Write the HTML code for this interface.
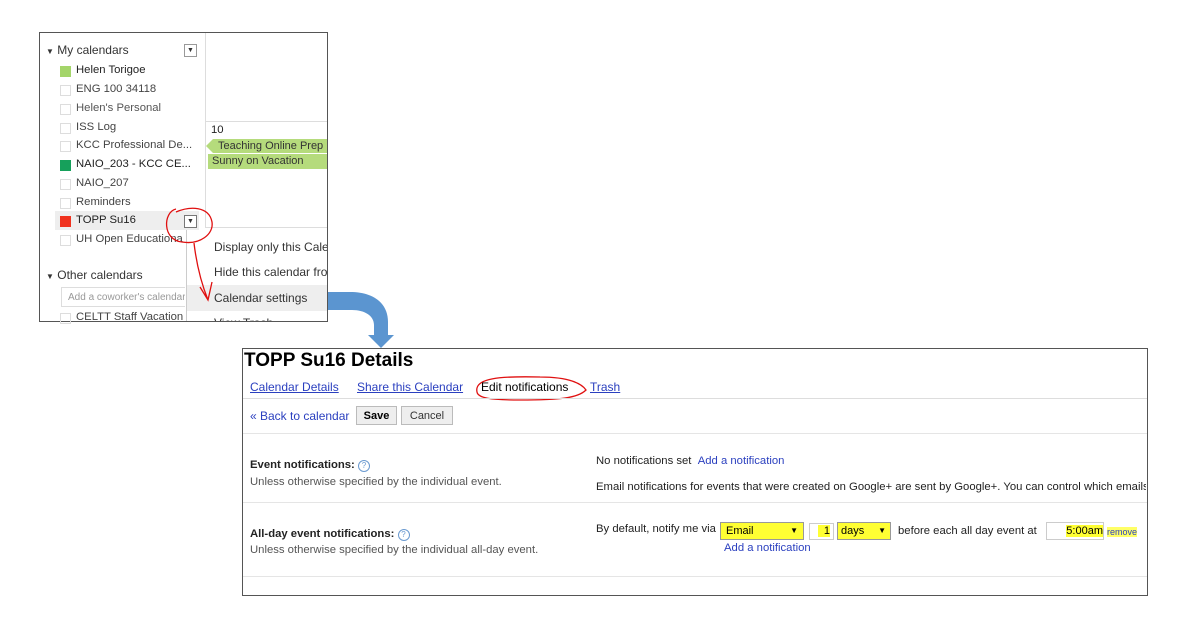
<!DOCTYPE html>
<html><head><style>
body{margin:0;width:1200px;height:630px;background:#fff;position:relative;overflow:hidden;font-family:"Liberation Sans",Arial,sans-serif;}
.a{position:absolute;white-space:nowrap;}
.t{font-size:11.3px;color:#222;}
.sq{position:absolute;width:11px;height:11px;border:1px solid #ddd;box-sizing:border-box;left:60px;}
.lk{color:#2a3fbf;}
.u{text-decoration:underline;color:#2a3fbf;font-size:12px;}
.hl{background:#ffff33;}
</style></head><body>
<!-- left screenshot -->
<div class="a" style="left:39px;top:32px;width:289px;height:290px;border:1px solid #555;box-sizing:border-box;overflow:hidden;">
 <div class="a" style="left:165px;top:0;width:1px;height:290px;background:#ddd"></div>
 <div class="a" style="left:166px;top:88px;width:125px;height:1px;background:#ddd"></div>
 <div class="a" style="left:166px;top:194px;width:125px;height:1px;background:#ddd"></div>
 <div class="a t" style="left:171px;top:91px">10</div>
 <div class="a" style="left:173px;top:106px;width:120px;height:14px;background:#b5db7c;font-size:11px;line-height:14px;padding-left:5px;color:#333;overflow:hidden">Teaching Online Prep</div>
 <div class="a" style="left:166px;top:106px;width:0;height:0;border-top:7px solid transparent;border-bottom:7px solid transparent;border-right:7px solid #b5db7c"></div>
 <div class="a" style="left:168px;top:121px;width:125px;height:15px;background:#b5db7c;font-size:11px;line-height:15px;padding-left:4px;color:#333;overflow:hidden">Sunny on Vacation</div>
 <div class="a" style="left:146px;top:195px;width:141px;height:94px;background:#fff;border-left:1px solid #ccc;overflow:hidden">
  <div class="a t" style="left:27px;top:12px;font-size:12px;color:#333">Display only this Calendar</div>
  <div class="a t" style="left:27px;top:37px;font-size:12px;color:#333">Hide this calendar from list</div>
  <div class="a" style="left:0;top:57px;width:142px;height:26px;background:#eee"></div>
  <div class="a t" style="left:27px;top:63px;font-size:12px;color:#333">Calendar settings</div>
  <div class="a t" style="left:27px;top:88px;font-size:12px;color:#333">View Trash</div>
 </div>
</div>
<div class="a t" style="left:46px;top:43px;font-size:12px;color:#333"><span style="font-size:8px">▼</span> My calendars</div>
<div class="a" style="left:184px;top:44px;width:11px;height:11px;border:1px solid #999;font-size:7px;text-align:center;line-height:11px;color:#333">▼</div>
<div class="sq" style="top:66px;background:#a4d56a;border-color:#a4d56a"></div><div class="a t" style="left:76px;top:64px">Helen Torigoe</div>
<div class="sq" style="top:85px"></div><div class="a t" style="left:76px;top:83px;color:#444">ENG 100 34118</div>
<div class="sq" style="top:104px"></div><div class="a t" style="left:76px;top:102px;color:#555">Helen's Personal</div>
<div class="sq" style="top:123px"></div><div class="a t" style="left:76px;top:121px;color:#444">ISS Log</div>
<div class="sq" style="top:141px"></div><div class="a t" style="left:76px;top:139px;color:#444">KCC Professional De...</div>
<div class="sq" style="top:160px;background:#16a05b;border-color:#16a05b"></div><div class="a t" style="left:76px;top:158px">NAIO_203 - KCC CE...</div>
<div class="sq" style="top:179px"></div><div class="a t" style="left:76px;top:177px;color:#444">NAIO_207</div>
<div class="sq" style="top:198px"></div><div class="a t" style="left:76px;top:196px;color:#444">Reminders</div>
<div class="a" style="left:55px;top:211px;width:144px;height:19px;background:#eee"></div>
<div class="sq" style="top:216px;background:#f0321e;border-color:#f0321e"></div><div class="a t" style="left:76px;top:214px">TOPP Su16</div>
<div class="a" style="left:184px;top:215px;width:11px;height:11px;border:1px solid #777;background:#fff;font-size:7px;text-align:center;line-height:11px;color:#333">▼</div>
<div class="sq" style="top:235px"></div><div class="a t" style="left:76px;top:233px;color:#444;width:108px;overflow:hidden">UH Open Educationa</div>
<div class="a t" style="left:46px;top:268px;font-size:12px;color:#333"><span style="font-size:8px">▼</span> Other calendars</div>
<div class="a" style="left:61px;top:287px;width:124px;height:20px;border:1px solid #ddd;border-right:none;font-size:10px;color:#999;line-height:20px;padding-left:6px;box-sizing:border-box;overflow:hidden">Add a coworker's calendar</div>
<div class="sq" style="top:313px"></div><div class="a t" style="left:76px;top:311px;color:#444;height:10px;overflow:hidden;width:108px">CELTT Staff Vacation</div>
<!-- red annotations and blue arrow -->
<svg class="a" style="left:0;top:0" width="1200" height="630">
 <path d="M176 209 C163 212 162 240 182 242 C200 245 214 234 212 222 C209 206 190 206 176 212" fill="none" stroke="#e01010" stroke-width="1.3"/>
 <path d="M194 243 C196 260 200 280 208 300 M200 287 L208 300 L212 282" fill="none" stroke="#e01010" stroke-width="1.3"/>
 <path d="M477 392 C474 378 500 376 540 377 C570 377 582 384 586 390 C578 398 560 400 520 400 C490 400 478 398 477 392Z" fill="none" stroke="#e01010" stroke-width="1.3"/>
 <path d="M328 292 L350 292 C372 292 388 302 388 322 L388 335 L394 335 L381 348 L368 335 L374 335 L374 325 C374 316 365 310 352 310 L328 310 Z" fill="#5b95d0"/>
</svg>
<!-- details box -->
<div class="a" style="left:242px;top:348px;width:906px;height:248px;border:1px solid #555;box-sizing:border-box"></div>
<div class="a" style="left:244px;top:350px;font-size:19px;font-weight:bold;color:#000">TOPP Su16 Details</div>
<div class="a u" style="left:250px;top:380px">Calendar Details</div>
<div class="a u" style="left:357px;top:380px">Share this Calendar</div>
<div class="a" style="left:481px;top:380px;font-size:12px;color:#000">Edit notifications</div>
<div class="a u" style="left:590px;top:380px">Trash</div>
<div class="a" style="left:243px;top:398px;width:904px;height:1px;background:#ddd"></div>
<div class="a lk" style="left:250px;top:409px;font-size:12px">« Back to calendar</div>
<div class="a" style="left:356px;top:406px;width:41px;height:19px;border:1px solid #bbb;background:#eee;font-size:11px;font-weight:bold;text-align:center;line-height:19px;box-sizing:border-box">Save</div>
<div class="a" style="left:401px;top:406px;width:52px;height:19px;border:1px solid #bbb;background:#eee;font-size:11px;color:#333;text-align:center;line-height:19px;box-sizing:border-box">Cancel</div>
<div class="a" style="left:243px;top:433px;width:904px;height:1px;background:#e5e5e5"></div>
<div class="a" style="left:250px;top:459px;font-size:11.3px;font-weight:bold;color:#222">Event notifications: <span style="display:inline-block;width:10px;height:10px;border:1px solid #6b9ad0;border-radius:50%;font-size:8px;line-height:10px;text-align:center;color:#6b9ad0;font-weight:normal">?</span></div>
<div class="a t" style="left:250px;top:476px;color:#555">Unless otherwise specified by the individual event.</div>
<div class="a t" style="left:596px;top:455px">No notifications set &nbsp;<span class="lk">Add a notification</span></div>
<div class="a t" style="left:596px;top:481px;width:550px;overflow:hidden">Email notifications for events that were created on Google+ are sent by Google+. You can control which emails</div>
<div class="a" style="left:243px;top:502px;width:904px;height:1px;background:#e5e5e5"></div>
<div class="a" style="left:250px;top:528px;font-size:11.3px;font-weight:bold;color:#222">All-day event notifications: <span style="display:inline-block;width:10px;height:10px;border:1px solid #6b9ad0;border-radius:50%;font-size:8px;line-height:10px;text-align:center;color:#6b9ad0;font-weight:normal">?</span></div>
<div class="a t" style="left:250px;top:544px;color:#555">Unless otherwise specified by the individual all-day event.</div>
<div class="a t" style="left:596px;top:523px">By default, notify me via</div>
<div class="a hl" style="left:720px;top:522px;width:84px;height:18px;border:1px solid #999;box-sizing:border-box;font-size:11px;line-height:16px;padding-left:5px">Email<span style="position:absolute;right:5px;font-size:8px">▼</span></div>
<div class="a" style="left:809px;top:523px;width:25px;height:17px;border:1px solid #ccc;box-sizing:border-box;font-size:11px;text-align:right;line-height:15px;padding-right:3px"><span class="hl">&nbsp;&nbsp;1</span></div>
<div class="a hl" style="left:837px;top:522px;width:54px;height:18px;border:1px solid #999;box-sizing:border-box;font-size:11px;line-height:16px;padding-left:3px">days<span style="position:absolute;right:4px;font-size:8px">▼</span></div>
<div class="a t" style="left:898px;top:525px">before each all day event at</div>
<div class="a" style="left:1046px;top:522px;width:58px;height:18px;border:1px solid #ccc;box-sizing:border-box;font-size:11px;text-align:right;line-height:16px"><span class="hl">5:00am</span></div>
<div class="a lk" style="left:1107px;top:527px;font-size:9px;background:#ffff66">remove</div>
<div class="a lk t" style="left:724px;top:542px;color:#2a3fbf">Add a notification</div>
<div class="a" style="left:243px;top:576px;width:904px;height:1px;background:#e5e5e5"></div>
</body></html>
